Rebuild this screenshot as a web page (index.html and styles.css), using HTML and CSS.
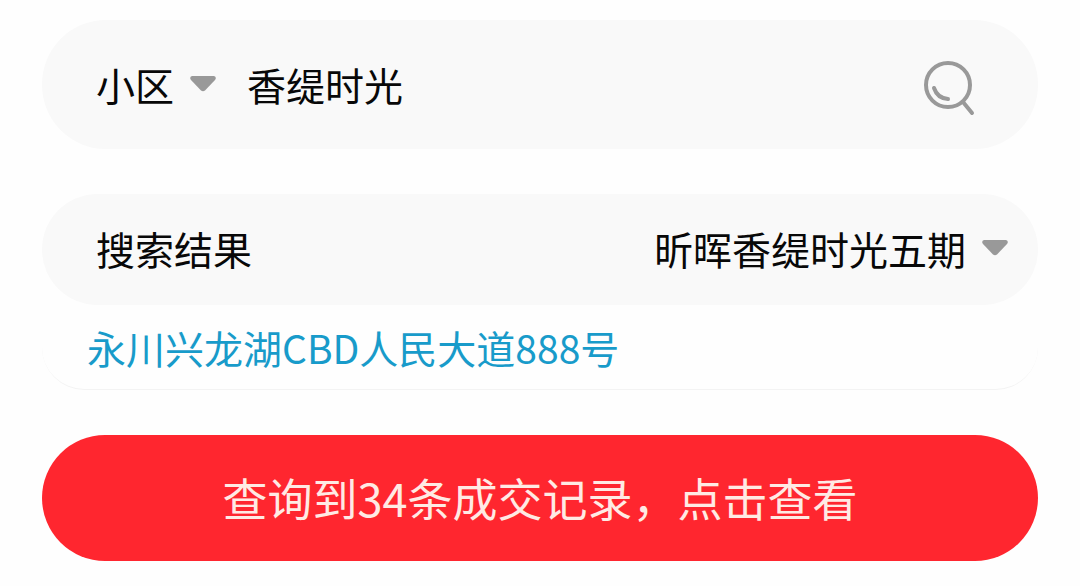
FILE: index.html
```html
<!DOCTYPE html>
<html lang="zh-CN">
<head>
<meta charset="utf-8">
<meta name="viewport" content="width=device-width, initial-scale=1">
<title>小区成交查询</title>
<link rel="stylesheet" href="styles.css">
</head>
<body>
<main class="page">
  <form class="bar search">
    <span class="picker">
      <select class="select" aria-label="搜索类型"><option>小区</option></select>
      <svg class="arrow" viewBox="0 0 26 16" aria-hidden="true"><path d="M2 0H24Q27 1 25 4L15 14.500Q13 16 11 14.500L1 4Q-1 1 2 0Z"/></svg>
    </span>
    <input class="keyword" type="text" value="香缇时光" aria-label="关键词">
    <button class="search-button" type="submit" aria-label="搜索">
      <svg class="search-icon" viewBox="0 0 52 56" aria-hidden="true">
        <circle cx="25" cy="25" r="22"/>
        <path d="M11 28C13 34 18 38.500 25 39M40 42L49 53"/>
      </svg>
    </button>
  </form>
  <section class="results">
    <div class="bar result">
      <label class="result-label" for="community">搜索结果</label>
      <span class="picker">
        <select class="select" id="community"><option>昕晖香缇时光五期</option></select>
        <svg class="arrow" viewBox="0 0 26 16" aria-hidden="true"><path d="M2 0H24Q27 1 25 4L15 14.500Q13 16 11 14.500L1 4Q-1 1 2 0Z"/></svg>
      </span>
    </div>
    <p class="address">永川兴龙湖CBD人民大道888号</p>
  </section>
  <button class="records" type="button">查询到34条成交记录，点击查看</button>
</main>
</body>
</html>
```

FILE: styles.css
```css
* {
  box-sizing: border-box;
}

body {
  margin: 0;
  background: #fefefe;
  color: #080808;
  font-family: "Noto Sans CJK SC", sans-serif;
  font-size: 39px;
  line-height: 58px;
}

button,
input,
select {
  margin: 0;
  padding: 0;
  border: 0;
  background: none;
  color: inherit;
  font: inherit;
}

.page {
  display: flex;
  flex-direction: column;
  gap: 45px;
  padding: 20px 42px 24px;
}

.bar {
  display: flex;
  align-items: center;
  border-radius: 64px;
  background: #f9f9f9;
}

.search {
  gap: 31px;
  padding: 32px 63px 33px 54px;
}

.picker {
  display: grid;
  align-items: center;
}

.select {
  grid-area: 1 / 1;
  height: 58px;
  padding-right: 41px;
  appearance: none;
}

.arrow {
  grid-area: 1 / 1;
  justify-self: end;
  width: 26px;
  height: 16px;
  fill: #999;
  pointer-events: none;
}

.keyword {
  flex: 1;
  min-width: 0;
  height: 58px;
}

.search-button {
  display: flex;
  padding-top: 8px;
}

.search-icon {
  width: 52px;
  height: 56px;
  fill: none;
  stroke: #999;
  stroke-width: 4;
  stroke-linecap: round;
}

.result {
  justify-content: space-between;
  padding: 25px 30px 28px 54px;
}

.address {
  margin: 0;
  padding: 13px 45px;
  border-bottom: 1px solid #f3f3f3;
  border-radius: 48px;
  color: #189bca;
}

.records {
  padding: 30px 24px;
  border-radius: 64px;
  background: #ff262f;
  color: #ffeae4;
  font-size: 45px;
  line-height: 66px;
}
```
